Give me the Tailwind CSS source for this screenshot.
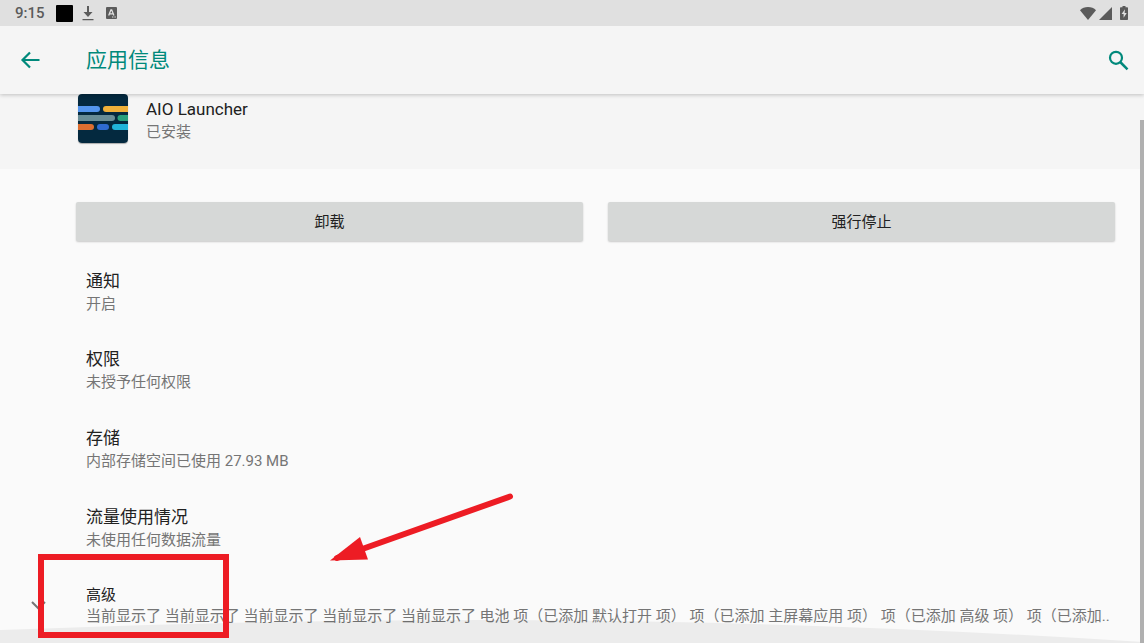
<!DOCTYPE html>
<html lang="zh-CN">
<head>
<meta charset="utf-8">
<meta name="viewport" content="width=device-width, initial-scale=1">
<title>应用信息</title>
<script src="https://cdn.jsdelivr.net/npm/@tailwindcss/browser@4"></script>
</head>
<body class="relative flex h-screen flex-col overflow-hidden bg-[#fafafa] font-['Roboto','Noto_Sans_CJK_SC',sans-serif] text-[#212121]">

  <!-- Status bar -->
  <div class="z-20 flex h-[26px] shrink-0 items-center bg-[#e0e0e0] pr-[15px] pl-[15px] text-[#5b5b5b]">
    <span class="w-[41px] text-[15px] leading-5 font-medium">9:15</span>
    <span class="size-[17px] rounded-[1px] bg-black"></span>
    <svg class="ml-[9px] h-4 w-3" viewBox="0 0 12 16" fill="currentColor" aria-hidden="true"><path d="M5 1h2v6h3.500L6 12 1.500 7H5zM.500 14h11v1.200H.5z"/></svg>
    <svg class="ml-3 size-[12px]" viewBox="0 0 12 12" aria-hidden="true"><rect width="11" height="12" rx="1" fill="currentColor"/><path d="M2.700 8.500 4.900 2.800h.8L7.900 8.500M3.600 6.800h3.500" fill="none" stroke="#e0e0e0" stroke-width="1.300"/><path d="M6 10h4" stroke="#e0e0e0" stroke-dasharray="1 .6"/></svg>
    <svg class="ml-auto h-[13px] w-4" viewBox="0 0 16 13" fill="currentColor" aria-hidden="true"><path d="M8 13 0 3.200C2 1.200 4.800 0 8 0s6 1.200 8 3.200z"/></svg>
    <svg class="ml-[3px] size-[13px]" viewBox="0 0 13 13" fill="currentColor" aria-hidden="true"><path d="M13 0v13H0z"/></svg>
    <svg class="mr-[1px] ml-2 h-[14px] w-2" viewBox="0 0 8 14" aria-hidden="true"><path d="M2.500 0h3v1.200H7.200q.8 0 .8.800v11.200q0 .8-.8.800H.8q-.8 0-.8-.8V2q0-.8.8-.8h1.700z" fill="currentColor"/><path d="M5 3.300 1.600 8h2v3.700L6.700 7H4.600z" fill="#e0e0e0"/></svg>
  </div>

  <!-- App bar -->
  <header class="z-10 flex h-[68px] shrink-0 items-center bg-[#f5f5f5] pr-[15px] pl-[20px] text-[#00897b] shadow-[0_1px_4px_rgba(0,0,0,0.22)]">
    <button type="button" aria-label="返回" class="w-[66px]">
      <svg class="h-5 w-[21px]" viewBox="0 0 21 20" fill="none" stroke="currentColor" stroke-width="2.200" aria-hidden="true"><path d="M19.500 10H3M10 2.500 2.500 10l7.500 7.500"/></svg>
    </button>
    <h1 class="text-[21px] leading-8">应用信息</h1>
    <button type="button" aria-label="搜索" class="ml-auto">
      <svg class="size-[21px]" viewBox="0 0 21 21" fill="none" stroke="currentColor" aria-hidden="true"><circle cx="8" cy="7.800" r="6" stroke-width="2.200"/><path d="m12.200 12 7.300 7.300" stroke-width="2.500"/></svg>
    </button>
  </header>

  <main>
    <!-- App summary -->
    <section class="flex h-[75px] items-start bg-[#f5f5f5] pl-[78px]">
      <svg class="h-[49px] w-[50px] rounded-[4px] shadow-[0_1px_1px_rgba(0,0,0,0.3)]" viewBox="0 0 50 49" aria-hidden="true">
        <rect width="50" height="49" fill="#04293f"/>
        <rect x="-5" y="12" width="27" height="6" rx="3" fill="#5496ee"/>
        <rect x="25" y="12" width="30" height="6" rx="3" fill="#efb03a"/>
        <rect x="-5" y="21" width="42" height="6" rx="3" fill="#688d96"/>
        <rect x="39.500" y="21" width="16" height="6" rx="3" fill="#279f7c"/>
        <rect x="-5" y="30" width="21" height="6" rx="3" fill="#dc6e30"/>
        <rect x="19" y="30" width="12" height="6" rx="3" fill="#2e6bd2"/>
        <rect x="34" y="30" width="21" height="6" rx="3" fill="#20b4da"/>
      </svg>
      <div class="pt-[3px] pl-[18px]">
        <h2 class="text-[17px] leading-6">AIO Launcher</h2>
        <p class="text-[15px] leading-[22px] text-[#757575]">已安装</p>
      </div>
    </section>

    <!-- Actions -->
    <div class="flex gap-[25px] pt-[33px] pr-[29px] pb-[11px] pl-[76px]">
      <button type="button" class="h-[39px] flex-1 rounded-[2px] bg-[#d6d8d7] pt-[2px] text-[15px] shadow-[0_1px_2px_rgba(0,0,0,0.2)]">卸载</button>
      <button type="button" class="h-[39px] flex-1 rounded-[2px] bg-[#d6d8d7] pt-[2px] text-[15px] shadow-[0_1px_2px_rgba(0,0,0,0.2)]">强行停止</button>
    </div>

    <!-- Preferences -->
    <nav class="text-[15px] leading-[22px] text-[#757575]">
      <a href="#notifications" class="block pt-[17px] pr-9 pb-[16px] pl-[86px]">
        <span class="block text-[17px] leading-6 text-[#212121]">通知</span>
        <span class="block">开启</span>
      </a>
      <a href="#permissions" class="block pt-[16px] pr-9 pb-[16px] pl-[86px]">
        <span class="block text-[17px] leading-6 text-[#212121]">权限</span>
        <span class="block">未授予任何权限</span>
      </a>
      <a href="#storage" class="block pt-[17px] pr-9 pb-[16px] pl-[86px]">
        <span class="block text-[17px] leading-6 text-[#212121]">存储</span>
        <span class="block">内部存储空间已使用 27.93 MB</span>
      </a>
      <a href="#data" class="block pt-[17px] pr-9 pb-[16px] pl-[86px]">
        <span class="block text-[17px] leading-6 text-[#212121]">流量使用情况</span>
        <span class="block">未使用任何数据流量</span>
      </a>
      <a href="#advanced" class="flex items-center pt-[17px] pl-[31px]">
        <svg class="w-[55px] shrink-0" height="9" viewBox="0 0 55 9" fill="none" stroke="#757575" stroke-width="2" aria-hidden="true"><path d="m1 1 6.500 6.500L14 1"/></svg>
        <span class="min-w-0 flex-1 overflow-hidden whitespace-nowrap">
          <span class="block text-[#212121]">高级</span>
          <span class="block leading-5">当前显示了 当前显示了 当前显示了 当前显示了 当前显示了 电池 项（已添加 默认打开 项） 项（已添加 主屏幕应用 项） 项（已添加 高级 项） 项（已添加..</span>
        </span>
      </a>
    </nav>
  </main>

  <!-- Overscroll glow -->
  <svg class="pointer-events-none absolute bottom-0 left-0 h-6 w-full" viewBox="0 0 1144 24" preserveAspectRatio="none" aria-hidden="true"><path d="M0 11Q240 1 480 1 800 1 1144 23V24H0z" fill="#000" fill-opacity=".055"/></svg>

  <!-- Scrollbar -->
  <div class="absolute top-[120px] right-0 bottom-0 w-1 bg-[#b0b0b0]"></div>

  <!-- Annotations -->
  <div class="pointer-events-none absolute top-[554px] left-[38px] h-[84px] w-[191px] border-6 border-[#ed1c24]"></div>
  <svg class="pointer-events-none absolute top-[490px] left-[328px] h-[74px] w-[188px]" viewBox="0 0 188 74" aria-hidden="true"><path d="M9 68 182 6.500" stroke="#ed1c24" stroke-width="6" stroke-linecap="round"/><path d="M2 70.500 32 47l8 22.500z" fill="#ed1c24"/></svg>
</body>
</html>
